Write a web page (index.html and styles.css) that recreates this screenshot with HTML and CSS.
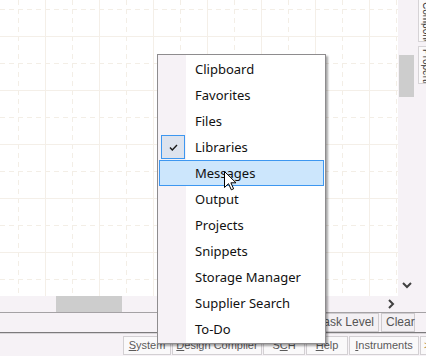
FILE: index.html
```html
<!DOCTYPE html>
<html>
<head>
<meta charset="utf-8">
<link rel="stylesheet" href="styles.css">
</head>
<body>
<div class="app">
  <div class="work">
    <div class="canvas">
      <svg class="grid" width="398" height="296" viewBox="0 0 398 296">
        <defs>
          <pattern id="g" width="54" height="54" patternUnits="userSpaceOnUse">
            <line x1="0" y1="9.5" x2="54" y2="9.5" stroke="#f3eee6" stroke-dasharray="5 4"/>
            <line x1="18.5" y1="0" x2="18.5" y2="54" stroke="#f3eee6" stroke-dasharray="5 4"/>
            <line x1="0" y1="36.5" x2="54" y2="36.5" stroke="#f4efe8"/>
            <line x1="45.5" y1="0" x2="45.5" y2="54" stroke="#f4efe8"/>
          </pattern>
        </defs>
        <rect width="398" height="296" fill="#ffffff"/>
        <rect width="398" height="296" fill="url(#g)"/>
      </svg>
    </div>
    <div class="vscroll">
      <div class="vthumb"></div>
      <svg class="arrow-down" width="10" height="7" viewBox="0 0 10 7"><path d="M1 1 L5 5 L9 1" fill="none" stroke="#404040" stroke-width="2"/></svg>
    </div>
    <div class="sidetabs">
      <div class="stab stab1">Components</div>
      <div class="stab stab2">Properties</div>
    </div>
    <div class="hscroll">
      <div class="hthumb"></div>
      <svg class="arrow-right" width="7" height="10" viewBox="0 0 7 10"><path d="M1 1 L5 5 L1 9" fill="none" stroke="#404040" stroke-width="2"/></svg>
    </div>
    <div class="corner"></div>
  </div>
  <div class="panel">
    <div class="pbtn pbtn-mask">Mask Level</div>
    <div class="pbtn pbtn-clear">Clear</div>
  </div>
  <div class="status">
    <div class="sbtn w-system"><u>S</u>ystem</div>
    <div class="sbtn w-dc"><u>D</u>esign Compiler</div>
    <div class="sbtn w-sch">S<u>C</u>H</div>
    <div class="sbtn w-help"><u>H</u>elp</div>
    <div class="sbtn w-inst"><u>I</u>nstruments</div>
    <div class="sbtn w-more">&gt;&gt;</div>
  </div>
</div>

<div class="menu">
  <div class="item"><span class="ico"></span><span class="lbl">Clipboard</span></div>
  <div class="item"><span class="ico"></span><span class="lbl">Favorites</span></div>
  <div class="item"><span class="ico"></span><span class="lbl">Files</span></div>
  <div class="item checked"><span class="ico"><svg width="9" height="7" viewBox="0 0 9 7"><path d="M1 3.5 L3.3 6 L8 1" fill="none" stroke="#1a1a1a" stroke-width="1.4"/></svg></span><span class="lbl">Libraries</span></div>
  <div class="item hot"><span class="ico"></span><span class="lbl">Messages</span></div>
  <div class="item"><span class="ico"></span><span class="lbl">Output</span></div>
  <div class="item"><span class="ico"></span><span class="lbl">Projects</span></div>
  <div class="item"><span class="ico"></span><span class="lbl">Snippets</span></div>
  <div class="item"><span class="ico"></span><span class="lbl">Storage Manager</span></div>
  <div class="item"><span class="ico"></span><span class="lbl">Supplier Search</span></div>
  <div class="item"><span class="ico"></span><span class="lbl">To-Do</span></div>
</div>

<svg class="cursor" width="13" height="20" viewBox="0 0 13 20">
  <path d="M0.5 0.5 L0.5 16.5 L4.5 12.7 L7.3 18.8 L9.6 17.8 L6.9 11.8 L12 11.8 Z" fill="#ffffff" stroke="#000000" stroke-width="1" stroke-linejoin="miter"/>
</svg>
</body>
</html>
```

FILE: styles.css
```css
html, body {
  margin: 0;
  padding: 0;
}
body {
  width: 426px;
  height: 356px;
  overflow: hidden;
  background: #f6f2f6;
  font-family: "Noto Sans", "Open Sans", sans-serif;
  position: relative;
}
.app {
  display: flex;
  flex-direction: column;
  width: 426px;
  height: 356px;
}
.work {
  display: grid;
  grid-template-columns: 398px 17px 11px;
  grid-template-rows: 296px 16px;
}
.canvas {
  grid-column: 1;
  grid-row: 1;
  overflow: hidden;
}
.grid {
  display: block;
}
.vscroll {
  grid-column: 2;
  grid-row: 1;
  background: #f6f2f6;
  display: flex;
  flex-direction: column;
  align-items: flex-start;
  padding-left: 1px;
}
.vthumb {
  margin-top: 55px;
  width: 15px;
  height: 42px;
  background: #cdcdcd;
}
.arrow-down {
  margin-top: auto;
  margin-bottom: 7px;
  margin-left: 3px;
}
.sidetabs {
  grid-column: 3;
  grid-row: 1 / span 2;
  background: #f6f2f6;
  display: flex;
  flex-direction: column;
  gap: 4px;
  padding-left: 3px;
  overflow: hidden;
}
.stab {
  width: 16px;
  background: #fbfafb;
  border: 1px solid #d6d3d6;
  writing-mode: vertical-rl;
  font-family: "Liberation Sans", sans-serif;
  font-size: 10px;
  color: #333;
  line-height: 14px;
  overflow: hidden;
  padding-top: 2px;
  box-sizing: border-box;
}
.stab1 {
  height: 43px;
  margin-top: -1px;
}
.stab2 {
  height: 38px;
}
.hscroll {
  grid-column: 1;
  grid-row: 2;
  background: #f6f2f6;
  display: flex;
  align-items: center;
}
.hthumb {
  margin-left: 56px;
  width: 66px;
  height: 16px;
  background: #cdcdcd;
}
.arrow-right {
  margin-left: auto;
  margin-right: 3px;
}
.corner {
  grid-column: 2;
  grid-row: 2;
  background: #f6f2f6;
}
.panel {
  height: 19px;
  border-top: 1px solid #a5a2a5;
  border-bottom: 1px solid #7c7a7c;
  box-shadow: 0 1px 0 #d8d5d8;
  background: #f6f2f6;
  display: flex;
  justify-content: flex-end;
  gap: 2px;
  padding-right: 11px;
}
.pbtn {
  height: 19px;
  box-sizing: border-box;
  border: 1px solid #cfcccf;
  background: #f3f0f3;
  color: #555;
  font-family: "Liberation Sans", sans-serif;
  font-size: 12px;
  line-height: 17px;
  padding: 0 4px;
}
.pbtn-mask {
  width: 80px;
  text-align: right;
}
.pbtn-clear {
  width: 34px;
}
.status {
  flex: 1;
  display: flex;
  align-items: flex-start;
  padding-top: 3px;
  padding-left: 123px;
  gap: 1px;
  overflow: hidden;
}
.sbtn {
  flex: none;
  height: 19px;
  box-sizing: border-box;
  border: 1px solid #d3d0d3;
  background: #faf9fa;
  color: #5a5a5a;
  font-family: "Liberation Sans", sans-serif;
  font-size: 11px;
  line-height: 17px;
  text-align: center;
  white-space: nowrap;
}
.w-system { width: 48px; }
.w-dc { width: 90px; }
.w-sch { width: 42px; }
.w-help { width: 42px; }
.w-inst { width: 70px; }
.w-more { width: 20px; color: #b08a3a; text-align: left; padding-left: 3px; }

.menu {
  position: absolute;
  left: 157px;
  top: 54px;
  width: 167px;
  padding: 1px 0 1px 0;
  border: 1px solid #8e8c8e;
  background: #ffffff;
  box-shadow: 2px 2px 2px rgba(0, 0, 0, 0.35);
  background-image: linear-gradient(to right, #f6f2f6 0, #f6f2f6 28px, #ffffff 28px);
}
.item {
  height: 26px;
  display: flex;
  align-items: center;
  box-sizing: border-box;
  font-size: 13px;
  color: #111;
  margin: 0 1px;
  border: 1px solid transparent;
}
.ico {
  width: 24px;
  height: 24px;
  box-sizing: border-box;
  display: flex;
  align-items: center;
  justify-content: center;
  flex: none;
}
.lbl {
  margin-left: 11px;
  white-space: nowrap;
}
.item.checked .ico {
  border: 1px solid #3d97f0;
  background: #dde3ee;
  margin-left: 1px;
}
.item.checked .lbl {
  margin-left: 10px;
}
.item.hot {
  background: #cce6fc;
  border: 1px solid #3d97f0;
}
.cursor {
  position: absolute;
  left: 224px;
  top: 171px;
}
```
